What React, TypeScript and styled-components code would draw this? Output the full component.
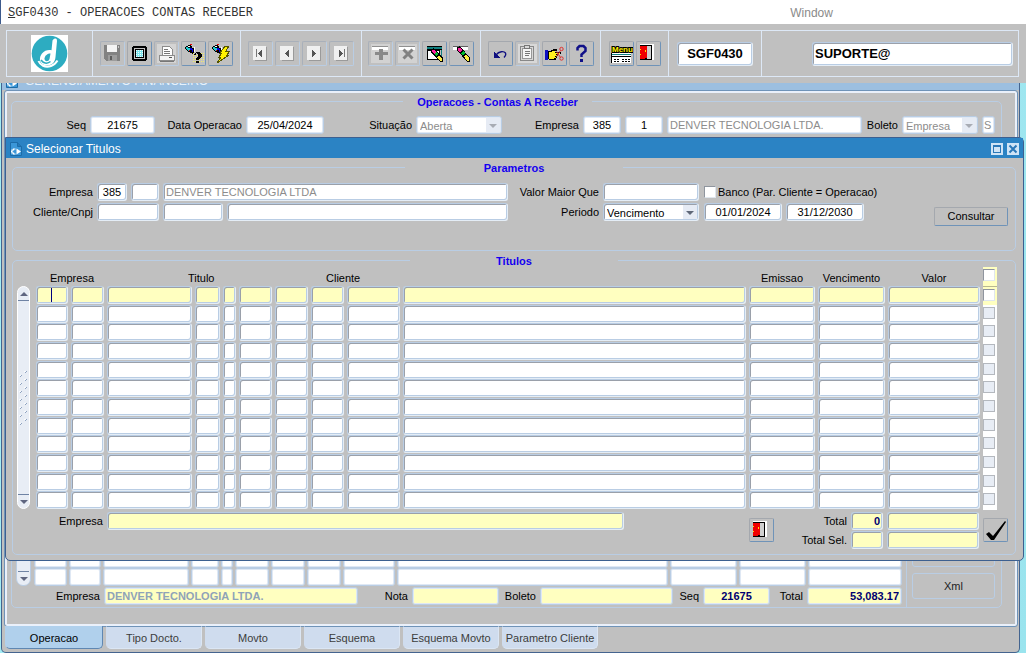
import React from "react";
import styled, { createGlobalStyle, css } from "styled-components";

const GlobalStyle = createGlobalStyle`
  *, *::before, *::after { box-sizing: border-box; }
  html, body { margin: 0; padding: 0; }
  body {
    background: #a2ecf4;
    color: #000;
    font: 11px/13px "Liberation Sans", Arial, sans-serif;
  }
  button, input, select { font: inherit; margin: 0; padding: 0; }
`;

const face = "#c0c0c0";
const line = "#b9cde4";
const cream = "#ffffc0";

/* ---------- page ---------- */

const Page = styled.div`
  display: flex;
  flex-direction: column;
  min-height: 100vh;
`;

const MenuBar = styled.nav`
  display: flex;
  align-items: center;
  height: 24px;
  padding-top: 1px;
  background: #fff;
  border-left: 1px solid #3c5a8c;
`;

const MenuItem = styled.button<{ $mono?: boolean }>`
  border: 0;
  background: none;
  text-align: left;
  font-size: 12px;
  line-height: 16px;
  color: #8a8a8a;
  ${(p) =>
    p.$mono &&
    css`
      flex: 0 0 77%;
      padding-left: 7px;
      font-family: "Liberation Mono", "Courier New", monospace;
      color: #333;
    `}
`;

const ToolbarArea = styled.header`
  padding: 6px 7px 6px 6px;
  background: ${face};
`;

const Toolbar = styled.div`
  display: flex;
  height: 47px;
  border: 1px solid #dde8f6;
`;

const ToolGroup = styled.div<{ $w?: number; $end?: boolean }>`
  display: flex;
  align-items: center;
  justify-content: ${(p) => (p.$end ? "flex-end" : "center")};
  gap: 2px;
  flex: ${(p) => (p.$w ? `0 0 ${p.$w}px` : "1 1 0")};
  padding-right: ${(p) => (p.$end ? 5 : 0)}px;
  & + & {
    border-left: 1px solid #dde8f6;
  }
`;

const ToolButton = styled.button<{ $off?: boolean }>`
  display: flex;
  align-items: center;
  justify-content: center;
  width: 25px;
  height: 25px;
  background: ${face};
  border: 1px solid;
  border-color: ${(p) => (p.$off ? "#a9b0ba #b9cde4 #b9cde4 #a9b0ba" : "#a4a8ae #6f93b8 #6f93b8 #a4a8ae")};
  border-radius: 2px;
`;

const Desktop = styled.main`
  position: relative;
  display: flex;
  flex: 1;
  padding: 0 6px 0 1px;
  background: linear-gradient(100deg, #a2ecf4, #aeeef6 60%, #9ae4ee);
`;

/* ---------- fields ---------- */

const Label = styled.label<{ $w?: number }>`
  flex: none;
  ${(p) => p.$w && `width: ${p.$w}px;`}
  text-align: right;
  white-space: nowrap;
`;

type FieldProps = {
  $w?: number;
  $flat?: boolean;
  $cream?: boolean;
  $align?: "left" | "center" | "right";
  $strong?: boolean;
  $muted?: string;
};

const fieldFrame = css<{ $flat?: boolean }>`
  border: 1px solid;
  border-color: ${line} #e4edf6 #e4edf6 ${line};
  border-radius: 3px;
  box-shadow: inset 1px 1px 0 #9aa0aa, inset -1px -1px 0 ${line};
  ${(p) =>
    p.$flat &&
    css`
      border-color: ${line};
      box-shadow: inset 0 0 0 1px #dfe8f4;
    `}
`;

const Field = styled.input<FieldProps>`
  ${fieldFrame}
  flex: ${(p) => (p.$w ? `0 0 ${p.$w}px` : "1 1 0")};
  width: ${(p) => (p.$w ? `${p.$w}px` : "100%")};
  min-width: 0;
  height: 18px;
  padding: 0 2px;
  outline: 0;
  background: ${(p) => (p.$cream ? cream : "#fff")};
  text-align: ${(p) => p.$align ?? "left"};
  color: ${(p) => p.$muted ?? (p.$strong ? "#000070" : "#000")};
  font-weight: ${(p) => (p.$strong ? 700 : 400)};
`;

const ToolbarField = styled(Field)`
  height: 24px;
  font-size: 13px;
  font-weight: 700;
`;

const FlagField = styled(Field)`
  padding: 0 0 0 1px;
`;

const SelectBox = styled.span<{ $w: number }>`
  position: relative;
  flex: 0 0 ${(p) => p.$w}px;
  height: 18px;
  svg {
    position: absolute;
    top: 2px;
    right: 2px;
    pointer-events: none;
  }
`;

const Select = styled.select<{ $flat?: boolean }>`
  ${fieldFrame}
  appearance: none;
  width: 100%;
  height: 18px;
  padding: 2px 3px 0;
  background: #fff;
  color: #000;
  opacity: 1;
  &:disabled {
    color: #8c8c8c;
  }
`;

const Tick = styled.input`
  appearance: none;
  display: block;
  flex: none;
  width: 12px;
  height: 12px;
  background: #fff;
  border: 1px solid;
  border-color: #8f959e #dfe6ee #dfe6ee #8f959e;
  &:disabled {
    background: #e8edf5;
    border-color: #b4b8be;
  }
`;

const Row = styled.div`
  display: flex;
  align-items: center;
  gap: 4px;
`;

const Group = styled.fieldset`
  min-width: 0;
  margin: 0;
  padding: 0;
  border: 1px solid ${line};
  border-radius: 5px;
`;

const Legend = styled.legend<{ $pad: number }>`
  margin: 0 auto;
  padding: 1px ${(p) => p.$pad}px 0;
  line-height: 12px;
  font-weight: 700;
  color: #1400f0;
`;

/* ---------- back window ---------- */

const Window = styled.section`
  display: flex;
  flex-direction: column;
  flex: 1;
  min-width: 0;
  padding: 0 2px 2px 3px;
  background: ${face};
  border: solid #44648f;
  border-width: 0 1px 1px;
  border-radius: 0 0 5px 5px;
`;

const ClippedTitle = styled.div`
  display: flex;
  align-items: flex-end;
  gap: 7px;
  height: 7px;
  margin: 0 -2px 0 -3px;
  padding: 0 4px 2px;
  overflow: hidden;
  background: #9cbfe0;
  color: #e6f1fb;
  font-size: 12px;
  line-height: 13px;
`;

const Sheet = styled.div`
  display: flex;
  flex-direction: column;
  flex: 1;
  padding: 2px 13px 16px 4px;
  border: 2px solid #eaf0fa;
  outline: 1px solid #6f93b8;
  border-radius: 2px;
  margin: 1px 0 0;
`;

const SheetGroup = styled(Group)`
  flex: 1;
  display: flex;
  flex-direction: column;
  padding-right: 18px;
`;

const SheetBody = styled.div`
  display: flex;
  flex-direction: column;
  flex: 1;
  height: 100%;
  margin-right: -18px;
`;

const SheetRow = styled(Row)`
  padding: 8px 6px 0 0;
`;

const SheetBottom = styled.div`
  display: flex;
  margin-top: auto;
`;

const SheetMain = styled.div`
  display: flex;
  flex-direction: column;
  justify-content: flex-end;
  flex: 1;
  min-width: 0;
`;

const SheetGridRow = styled.div`
  display: flex;
  padding: 0 2px 0 4px;
  gap: 3px;
`;

const SheetSide = styled.div`
  display: flex;
  flex-direction: column;
  gap: 6px;
  flex: 0 0 95px;
  padding: 0 6px 8px 5px;
  border-left: 1px solid ${line};
`;

const SideButton = styled.button`
  height: 26px;
  background: ${face};
  border: 1px solid ${line};
  border-radius: 3px;
  color: #222;
`;

const SheetFooter = styled(Row)`
  padding: 1px 4px 2px 0;
`;

const BackTable = styled.table`
  flex: 1;
  table-layout: fixed;
  border-collapse: collapse;
  td {
    padding: 0 2px 0 0;
  }
`;

const Tabs = styled.div`
  display: flex;
  gap: 3px;
  height: 24px;
`;

const Tab = styled.button<{ $on?: boolean }>`
  width: ${(p) => (p.$on ? 98 : 96)}px;
  height: 23px;
  padding-top: ${(p) => (p.$on ? 2 : 1)}px;
  border: 1px solid;
  border-color: ${(p) => (p.$on ? "#b0d0ec #5f87b2 #5f87b2 #b0d0ec" : "#6f93b8 #dbe6f4 #dbe6f4 #cfdcee")};
  border-top-width: ${(p) => (p.$on ? 0 : 1)}px;
  border-radius: 0 0 5px 5px;
  background: ${(p) => (p.$on ? "#b0d0ec" : "#cfdcee")};
  color: ${(p) => (p.$on ? "#000" : "#3c3c3c")};
  white-space: nowrap;
`;

/* ---------- dialog ---------- */

const Dialog = styled.section`
  position: absolute;
  top: 54px;
  left: 5px;
  right: 2px;
  padding-bottom: 5px;
  background: ${face};
  border: 1px solid #3d6090;
  border-radius: 0 5px 5px 5px;
`;

const TitleBar = styled.header`
  display: flex;
  align-items: center;
  gap: 4px;
  height: 20px;
  padding: 1px 4px 0;
  background: #2b83c4;
  color: #fff;
`;

const DialogTitle = styled.h1`
  flex: 1;
  margin: 0;
  font-size: 12px;
  line-height: 14px;
  font-weight: 400;
`;

const WinButton = styled.button`
  display: flex;
  width: 12px;
  height: 12px;
  border: 0;
  background: #cfe4f6;
`;

const DialogBody = styled.div`
  display: flex;
  flex-direction: column;
  gap: 3px;
  padding: 3px 7px 0 6px;
`;

const Params = styled.div`
  display: flex;
  align-items: flex-end;
  gap: 4px;
  padding: 9px 7px 24px 0;
`;

const ParamRows = styled.div`
  display: flex;
  flex: 1;
  flex-direction: column;
  gap: 2px;
  min-width: 0;
  padding-bottom: 5px;
`;

const ParamTail = styled(Row)`
  flex: 0 0 227px;
  padding-left: 1px;
`;

const CheckLabel = styled.label`
  display: flex;
  align-items: center;
  gap: 2px;
  white-space: nowrap;
`;

const PushButton = styled.button`
  width: 74px;
  height: 19px;
  background: ${face};
  border: 1px solid;
  border-color: #a4a8ae #6f93b8 #6f93b8 #a4a8ae;
  border-radius: 2px;
`;

const GridArea = styled.div`
  display: flex;
  gap: 6px;
  padding: 0 18px 0 4px;
`;

const ScrollTrack = styled.div`
  display: flex;
  flex-direction: column;
  justify-content: space-between;
  align-items: center;
  flex: 0 0 13px;
  margin: 19px 0 1px;
  background: #e8edf5;
  border: 1px solid #fff;
  border-radius: 7px;
`;

const ScrollButton = styled.button<{ $down?: boolean }>`
  display: flex;
  align-items: center;
  justify-content: center;
  width: 11px;
  height: 14px;
  background: none;
  border: 0 solid #6f83a4;
  ${(p) => (p.$down ? "border-top-width: 1px;" : "border-bottom-width: 1px;")}
`;

const BackScroll = styled.div`
  display: flex;
  align-items: flex-end;
  justify-content: center;
  flex: 0 0 15px;
  background: #e8edf5;
  border: 1px solid ${line};
  border-radius: 0 0 7px 7px;
`;

const Grid = styled.table`
  flex: 1;
  min-width: 0;
  table-layout: fixed;
  border-collapse: collapse;
`;

const HeadCell = styled.th<{ $indent?: number }>`
  height: 19px;
  padding: 3px 3px 0 ${(p) => p.$indent ?? 0}px;
  font-weight: 400;
  text-align: ${(p) => (p.$indent ? "left" : "center")};
`;

const TickHead = styled.th`
  height: 19px;
  padding: 2px 0 0;
  vertical-align: top;
  background: ${cream};
  border-bottom: 1px solid #b8b890;
`;

const GridRow = styled.tr`
  height: 19px;
  &:nth-child(3n + 2) {
    height: 18px;
  }
`;

const GridCell = styled.td`
  padding: 0 3px 0 0;
  vertical-align: top;
`;

const TickCell = styled.td<{ $cream?: boolean }>`
  padding: 2px 0 0;
  vertical-align: top;
  background: ${(p) => (p.$cream ? cream : "#fff")};
`;

const CellField = styled(Field)<{ $caret?: boolean }>`
  display: block;
  ${(p) =>
    p.$caret &&
    css`
      background: linear-gradient(#000080, #000080) no-repeat 14px 1px / 1px 14px ${cream};
    `}
`;

const Footer = styled.div`
  display: flex;
  align-items: flex-start;
  gap: 4px;
  padding: 2px 7px 5px 0;
`;

const FooterName = styled(Row)`
  flex: 1;
  padding-right: 121px;
`;

const Totals = styled.div`
  display: flex;
  flex-direction: column;
  gap: 1px;
`;

const FooterButton = styled(ToolButton)`
  margin-top: 6px;
  height: 24px;
`;

/* ---------- icons ---------- */

const Icon = ({ children }: { children: React.ReactNode }) => (
  <svg width="23" height="23" viewBox="1 1 23 23" shapeRendering="crispEdges" aria-hidden="true">
    {children}
  </svg>
);

const Logo = () => (
  <svg width="37" height="37" viewBox="0 0 37 37" aria-hidden="true">
    <rect width="37" height="37" fill="#fff" />
    <circle cx="18.500" cy="18.500" r="17.800" fill="#2dacc1" />
    <path
      d="M21.500 5.500C23.500 3 26 2.800 26 6L24.500 22C24 29 18 32 13 30C8 28 8 22 11 18.500C13.500 15.500 17 14.500 20.500 15.200Z"
      fill="#fff"
    />
    <path d="M19.500 18.500L18.500 24C17.500 27 13.500 27 13.500 23.500C13.800 20.500 16.500 18.500 19.500 18.500Z" fill="#2dacc1" />
    <path d="M7.500 26C9 30 14 33 20 31C23 30 25 28 26.500 25.500" stroke="#fff" strokeWidth="2" fill="none" />
    <path d="M10 25C12 28 16 29.500 19.500 26.500" stroke="#2dacc1" strokeWidth="1.500" fill="none" />
  </svg>
);

const DocIcon = () => (
  <svg width="12" height="14" viewBox="0 0 12 14" aria-hidden="true">
    <path d="M0.500 0.500h7l4 4v9h-11z" fill="#3b97d8" stroke="#1c6ca8" />
    <path d="M7.500 0.500v4h4" fill="#2479b8" stroke="#1c6ca8" />
    <path d="M6.500 6.500l4.500 3-4.500 3z" fill="#fff" />
    <path d="M5.500 7H3.500v1H2v3h1.500v1h2M2 9.500H1" stroke="#fff" strokeWidth="1.200" fill="none" />
  </svg>
);

const SaveIcon = () => (
  <Icon>
    <path d="M4 4h15l1 1v15H6l-2-2z" fill="#828282" />
    <path d="M7 4h10v7H7z" fill="#f4f4f4" />
    <path d="M8 14h9v6H8z" fill="#9c9c9c" />
    <path d="M10 15h2v4h-2z" fill="#5c5c5c" />
    <path d="M18 5h1v2h-1z" fill="#c8c8c8" />
  </Icon>
);

const ScreenIcon = () => (
  <Icon>
    <path d="M6 5h13v1h1v13h-1v1H6v-1H5V6h1z" fill="#000" />
    <path d="M7 7h11v11H7z" fill="#c0c0c0" />
    <path d="M8 8h9v9H8z" fill="#000" />
    <path d="M9 9h7v7H9z" fill="#7fe6ee" />
    <path d="M9 9.500h7M9 11.500h7M9 13.500h7M9 15.500h7" stroke="#f0ffff" strokeDasharray="1 1" />
  </Icon>
);

const PrintIcon = () => (
  <Icon>
    <path d="M3 3h19v19H3z" fill="#d4d4d4" />
    <path d="M8 5h7l3 3v6H8z" fill="#fff" stroke="#8c8c8c" />
    <path d="M10 8h4M10 10h6M10 12h6" stroke="#777" />
    <path d="M5 14h15v5H5z" fill="#f4f4f4" stroke="#8c8c8c" />
    <path d="M6 20h14" stroke="#777" />
    <path d="M15 16h3" stroke="#555" />
  </Icon>
);

const Torch = () => (
  <>
    <path d="M4 6h1V5h2V4h3v1h1v2h2v5h-1v1h-1v-1H9v-1H7v-1H6V9H5V8H4z" fill="#000" />
    <path d="M5 6h2v1h2v3H7V9H6V8H5z" fill="#20c8d0" />
    <path d="M9 7h2v1h1v3h-1V9H9z" fill="#0000e0" />
    <path d="M9 3h2v1H9zM8 9h1v1H8z" fill="#f00000" />
    <path d="M7 5h2v1H7zM13 6h1v5h-1z" fill="#fff" />
  </>
);

const QueryIcon = () => (
  <Icon>
    <Torch />
    <path d="M12 12.500h11M12 14.500h11M12 16.500h11M12 18.500h11M12 20.500h11" stroke="#f4f060" strokeDasharray="1 1" />
    <path d="M13 13h1v-1h1v-1h4v1h1v1h1v3h-1v1h-1v1h-1v1h-3v-2h1v-1h1v-3h-1v-1h-1v2h-3zM15 20h3v2h-3z" fill="#000" />
  </Icon>
);

const RunQueryIcon = () => (
  <Icon>
    <Torch />
    <path d="M17 5h4l-3 5h4l-3 4h2L9 22l4-6h-2l3-4h-2z" fill="#fff200" stroke="#555500" />
  </Icon>
);

const NavIcon = ({ back, bar }: { back?: boolean; bar?: boolean }) => (
  <Icon>
    <path d="M5 5h13v14H5z" fill="#f0f0f0" />
    <path d="M18 6v13H7" stroke="#9a9a9a" fill="none" />
    {back ? <path d="M14 9v7l-4-3.500z" fill="#555" /> : <path d="M10 9v7l4-3.500z" fill="#555" />}
    {bar && <path d={back ? "M8 8h1v8H8z" : "M15 8h1v8h-1z"} fill="#777" />}
  </Icon>
);

const RecordIcon = ({ remove }: { remove?: boolean }) => (
  <Icon>
    <path d="M3 3h19v19H3z" fill="#d2d2d2" />
    <path d="M4 5h16v4H4z" fill="#fff" />
    <path d="M4 5h16v1H4z" fill="#909090" />
    {remove ? (
      <path d="M8.500 8.500l9 9M17.500 8.500l-9 9" stroke="#808080" strokeWidth="3" shapeRendering="auto" />
    ) : (
      <path d="M11 8h4v3h5v3h-5v5h-4v-5H7v-3h4z" fill="#8a8a8a" />
    )}
  </Icon>
);

const Pencil = () => (
  <>
    <path d="M9 8l3-1 9 10v4h-3L9 11z" fill="#000" />
    <path d="M10 9h2l2 2-2 2-2-2z" fill="#ff20a0" />
    <path d="M12 13l2-2 2 2-2 2z" fill="#00c030" />
    <path d="M15 16l2-2 3 4v2h-2z" fill="#fff040" />
  </>
);

const ClearBlockIcon = () => (
  <Icon>
    <path d="M5 5h15v1H5zM5 8h15v1H5z" fill="#000" />
    <path d="M5 6h15v2H5z" fill="#108080" />
    <path d="M5 9h13v10H5z" fill="#000" />
    <path d="M6 10h11v8H6z" fill="#fff" />
    <path d="M19 9h1v8h-1z" fill="#108080" />
    <Pencil />
  </Icon>
);

const ClearRecordIcon = () => (
  <Icon>
    <path d="M4 5h15v4H4z" fill="#fff" />
    <path d="M4 5h15v1H4z" fill="#606060" />
    <path d="M8 6l3-1 10 12v4h-3L8 9z" fill="#000" />
    <path d="M9 7h2l2 2-2 3-2-3z" fill="#ff20a0" />
    <path d="M12 12l2-2 2 2-2 3z" fill="#00c030" />
    <path d="M15 15l2-2 3 4v3h-2z" fill="#fff040" />
  </Icon>
);

const UndoIcon = () => (
  <Icon>
    <path d="M8 14c3-4 8-4 9.500-2 1 2 0 3-1.500 4.500" stroke="#101080" fill="none" shapeRendering="auto" strokeWidth="1.300" />
    <path d="M6 11v6h6z" fill="#101080" />
  </Icon>
);

const ClipIcon = () => (
  <Icon>
    <path d="M3 3h19v19H3z" fill="#d8d8d8" />
    <path d="M5.500 5.500h13v14h-13z" fill="none" stroke="#888" />
    <path d="M7.500 7.500h9v10h-9z" fill="#f6f6f6" stroke="#999" />
    <path d="M9.500 4.500h5v3h-5z" fill="#d8d8d8" stroke="#777" />
    <path d="M10 10.500h5M10 12.500h5M10 14.500h4" stroke="#777" />
  </Icon>
);

const HandIcon = () => (
  <Icon>
    <path d="M3 9h3v10H3z" fill="#1010c0" />
    <path d="M6 10h3V9h2V8h4v2h-2v1h6v2h-3v2h-1v2h-1v2H7v-1H6z" fill="#000" />
    <path d="M7 11h3v-1h3v2h5v1h-4v1h1v1h-2v1h1v1h-2v1H7z" fill="#fff020" />
    <g stroke="#e03030" fill="none" shapeRendering="auto">
      <path d="M14.500 15.500l4-6M14.500 10.500l4 6" />
      <circle cx="19.500" cy="8" r="1.700" />
      <circle cx="19.500" cy="17.500" r="1.700" />
    </g>
  </Icon>
);

const HelpIcon = () => (
  <Icon>
    <path
      d="M8.500 9.500V7l2-2h4l2 2v3l-4 3.500V16"
      stroke="#101088"
      strokeWidth="2.500"
      fill="none"
      shapeRendering="auto"
    />
    <path d="M11 18h3v3h-3z" fill="#101088" />
  </Icon>
);

const MenuIcon = () => (
  <Icon>
    <text
      x="3"
      y="11"
      fontFamily="Liberation Sans, Arial, sans-serif"
      fontSize="8"
      fontWeight="700"
      fill="#fff200"
      stroke="#000"
      strokeWidth="2"
      paintOrder="stroke"
      shapeRendering="auto"
    >
      Menu
    </text>
    <path d="M3 12h19v10H3z" fill="#fff" />
    <path d="M3 13h19v1H3z" fill="#108080" />
    <path d="M2 12h1v10H2zM3 15h19v1H3z" fill="#000" />
    <path d="M5 18.500h6M13 18.500h8M5 20.500h6M13 20.500h8" stroke="#000" strokeDasharray="2 1" />
  </Icon>
);

const DoorIcon = () => (
  <Icon>
    <path d="M4 3h14v16H4z" fill="#fff" />
    <path d="M4 4h12v15H4z" fill="#000" />
    <path d="M11 5h4v13h-4z" fill="#d0d0d0" />
    <path d="M4 5h7v12H9v1H4z" fill="#f00000" />
    <path d="M9 9h1v2H9zM4 8h1v1H4zM4 13h1v1H4z" fill="#ffe000" />
  </Icon>
);

const CheckIcon = () => (
  <svg width="22" height="22" viewBox="0 0 22 22" aria-hidden="true">
    <path d="M1 15l3-2 4 4L20 2l1 1L9 21H6z" fill="#000" />
  </svg>
);

const SelectArrow = ({ dim }: { dim?: boolean }) => (
  <svg width="14" height="14" viewBox="0 0 14 14" aria-hidden="true">
    <rect width="14" height="14" fill="#e6ebf4" />
    <path d="M3 6h8l-4 4z" fill={dim ? "#a8acb4" : "#5f6878"} />
  </svg>
);

const Arrow = ({ down }: { down?: boolean }) => (
  <svg width="8" height="4" viewBox="0 0 8 4" aria-hidden="true">
    <path d={down ? "M0 0h8l-4 4z" : "M0 4h8l-4-4z"} fill="#5f6680" />
  </svg>
);

const Grip = () => (
  <svg width="9" height="54" viewBox="0 0 9 54" aria-hidden="true">
    {Array.from({ length: 7 }, (_, i) => (
      <React.Fragment key={i}>
        <path d={`M6 ${i * 8 + 2}l2-2M1 ${i * 8 + 6}l2-2`} stroke="#8fa3c0" />
        <path d={`M5 ${i * 8 + 1}l2-1M0 ${i * 8 + 5}l2-1`} stroke="#fff" />
      </React.Fragment>
    ))}
  </svg>
);

/* ---------- data ---------- */

type Tool = { name: string; icon: React.ReactNode; off?: boolean };

const tools: { w: number; items: Tool[] }[] = [
  {
    w: 148,
    items: [
      { name: "Salvar", icon: <SaveIcon />, off: true },
      { name: "Tela", icon: <ScreenIcon /> },
      { name: "Imprimir", icon: <PrintIcon />, off: true },
      { name: "Entrar consulta", icon: <QueryIcon /> },
      { name: "Executar consulta", icon: <RunQueryIcon /> },
    ],
  },
  {
    w: 121,
    items: [
      { name: "Primeiro", icon: <NavIcon back bar />, off: true },
      { name: "Anterior", icon: <NavIcon back />, off: true },
      { name: "Proximo", icon: <NavIcon />, off: true },
      { name: "Ultimo", icon: <NavIcon bar />, off: true },
    ],
  },
  {
    w: 119,
    items: [
      { name: "Inserir", icon: <RecordIcon />, off: true },
      { name: "Excluir", icon: <RecordIcon remove />, off: true },
      { name: "Limpar bloco", icon: <ClearBlockIcon /> },
      { name: "Limpar registro", icon: <ClearRecordIcon /> },
    ],
  },
  {
    w: 120,
    items: [
      { name: "Desfazer", icon: <UndoIcon /> },
      { name: "Colar", icon: <ClipIcon />, off: true },
      { name: "Recortar", icon: <HandIcon /> },
      { name: "Ajuda", icon: <HelpIcon /> },
    ],
  },
  {
    w: 68,
    items: [
      { name: "Menu", icon: <MenuIcon /> },
      { name: "Sair", icon: <DoorIcon /> },
    ],
  },
];

const gridColumns = [
  { name: "Empresa", w: 35 },
  { name: "Filial", w: 36 },
  { name: "Titulo", w: 88 },
  { name: "Serie", w: 28 },
  { name: "Tipo", w: 16 },
  { name: "Parcela", w: 36 },
  { name: "Sequencia", w: 36 },
  { name: "Cliente", w: 36 },
  { name: "Codigo", w: 56 },
  { name: "Nome", w: 0 },
  { name: "Emissao", w: 69 },
  { name: "Vencimento", w: 70 },
  { name: "Valor", w: 95 },
];

const backColumns = [35, 34, 88, 30, 14, 36, 36, 36, 54, 0, 69, 69, 96];

const tabs = ["Operacao", "Tipo Docto.", "Movto", "Esquema", "Esquema Movto", "Parametro Cliente"];

/* ---------- screen ---------- */

const BackWindow = () => (
  <Window>
    <ClippedTitle>
      <DocIcon />
      GERENCIAMENTO FINANCEIRO
    </ClippedTitle>
    <Sheet>
      <SheetGroup>
        <Legend $pad={14}>Operacoes - Contas A Receber</Legend>
        <SheetBody>
          <SheetRow>
            <Label $w={74} htmlFor="seq">Seq</Label>
            <Field id="seq" $w={65} $flat $align="center" defaultValue="21675" />
            <Label $w={83} htmlFor="data">Data Operacao</Label>
            <Field id="data" $w={78} $flat $align="center" defaultValue="25/04/2024" />
            <Label $w={84} htmlFor="situacao">Situação</Label>
            <SelectBox $w={86}>
              <Select id="situacao" $flat disabled defaultValue="Aberta">
                <option>Aberta</option>
              </Select>
              <SelectArrow dim />
            </SelectBox>
            <Label $w={73} htmlFor="emp">Empresa</Label>
            <Field id="emp" $w={38} $flat $align="center" defaultValue="385" />
            <Field aria-label="Filial" $w={38} $flat $align="center" defaultValue="1" />
            <Field aria-label="Nome da empresa" $flat $muted="#8c8c8c" readOnly value="DENVER TECNOLOGIA LTDA." />
            <Label $w={32} htmlFor="boletoTipo">Boleto</Label>
            <SelectBox $w={76}>
              <Select id="boletoTipo" $flat disabled defaultValue="Empresa">
                <option>Empresa</option>
              </Select>
              <SelectArrow dim />
            </SelectBox>
            <FlagField aria-label="Indicador" $w={13} $flat $muted="#8c8c8c" readOnly value="S" />
          </SheetRow>
          <SheetBottom>
            <SheetMain>
              <SheetGridRow>
                <BackScroll>
                  <ScrollButton $down aria-label="Descer lista">
                    <Arrow down />
                  </ScrollButton>
                </BackScroll>
                <BackTable>
                  <colgroup>
                    {backColumns.map((w, i) => (
                      <col key={i} width={w || undefined} />
                    ))}
                  </colgroup>
                  <tbody>
                    {[0, 1].map((r) => (
                      <tr key={r}>
                        {backColumns.map((_, i) => (
                          <td key={i}>
                            <CellField $flat aria-label={`Item ${r + 1}, coluna ${i + 1}`} />
                          </td>
                        ))}
                      </tr>
                    ))}
                  </tbody>
                </BackTable>
              </SheetGridRow>
              <SheetFooter>
                <Label $w={88} htmlFor="empNome">Empresa</Label>
                <Field id="empNome" $w={254} $flat $cream $strong $muted="#8fa3b8" readOnly value="DENVER TECNOLOGIA LTDA." />
                <Label $w={46} htmlFor="nota">Nota</Label>
                <Field id="nota" $w={87} $flat $cream />
                <Label $w={33} htmlFor="boleto">Boleto</Label>
                <Field id="boleto" $flat $cream />
                <Label $w={22} htmlFor="seqTotal">Seq</Label>
                <Field id="seqTotal" $w={67} $flat $cream $strong $align="center" readOnly value="21675" />
                <Label $w={29} htmlFor="total">Total</Label>
                <Field id="total" $w={95} $flat $cream $strong $align="right" readOnly value="53,083.17" />
              </SheetFooter>
            </SheetMain>
            <SheetSide>
              <SideButton aria-label="Outros" />
              <SideButton>Xml</SideButton>
            </SheetSide>
          </SheetBottom>
        </SheetBody>
      </SheetGroup>
    </Sheet>
    <Tabs role="tablist">
      {tabs.map((t, i) => (
        <Tab key={t} role="tab" aria-selected={i === 0} $on={i === 0}>
          {t}
        </Tab>
      ))}
    </Tabs>
  </Window>
);

const SelectDialog = () => (
  <Dialog role="dialog" aria-labelledby="dialogTitle">
    <TitleBar>
      <DocIcon />
      <DialogTitle id="dialogTitle">Selecionar Titulos</DialogTitle>
      <WinButton aria-label="Maximizar">
        <svg width="12" height="12" viewBox="0 0 12 12" shapeRendering="crispEdges" aria-hidden="true">
          <path d="M2.500 3.500h7v6h-7zM2 2.500h8" fill="none" stroke="#2b78b8" />
        </svg>
      </WinButton>
      <WinButton aria-label="Fechar">
        <svg width="12" height="12" viewBox="0 0 12 12" aria-hidden="true">
          <path d="M2.500 2.500l7 7M9.500 2.500l-7 7" stroke="#2b78b8" strokeWidth="2" />
        </svg>
      </WinButton>
    </TitleBar>
    <DialogBody>
      <Group>
        <Legend $pad={79}>Parametros</Legend>
        <Params>
          <ParamRows>
            <Row>
              <Label $w={80} htmlFor="pEmpresa">Empresa</Label>
              <Field id="pEmpresa" $w={30} $align="center" defaultValue="385" />
              <Field aria-label="Filial" $w={28} />
              <Field aria-label="Nome da empresa" $muted="#8c8c8c" readOnly value="DENVER TECNOLOGIA LTDA" />
              <Label $w={87} htmlFor="valorMaior">Valor Maior Que</Label>
              <Field id="valorMaior" $w={96} />
              <ParamTail>
                <CheckLabel>
                  <Tick type="checkbox" />
                  Banco (Par. Cliente = Operacao)
                </CheckLabel>
              </ParamTail>
            </Row>
            <Row>
              <Label $w={80} htmlFor="cliente">Cliente/Cnpj</Label>
              <Field id="cliente" $w={62} />
              <Field aria-label="Cnpj" $w={60} />
              <Field aria-label="Nome do cliente" />
              <Label $w={87} htmlFor="periodo">Periodo</Label>
              <SelectBox $w={96}>
                <Select id="periodo" defaultValue="Vencimento">
                  <option>Vencimento</option>
                  <option>Emissao</option>
                </Select>
                <SelectArrow />
              </SelectBox>
              <ParamTail>
                <Field aria-label="Data inicial" $w={78} $align="center" defaultValue="01/01/2024" />
                <Field aria-label="Data final" $w={78} $align="center" defaultValue="31/12/2030" />
              </ParamTail>
            </Row>
          </ParamRows>
          <PushButton>Consultar</PushButton>
        </Params>
      </Group>
      <Group>
        <Legend $pad={86}>Titulos</Legend>
        <GridArea>
          <ScrollTrack>
            <ScrollButton aria-label="Subir">
              <Arrow />
            </ScrollButton>
            <Grip />
            <ScrollButton $down aria-label="Descer">
              <Arrow down />
            </ScrollButton>
          </ScrollTrack>
          <Grid>
            <colgroup>
              {gridColumns.map((c) => (
                <col key={c.name} width={c.w || undefined} />
              ))}
              <col width={14} />
            </colgroup>
            <thead>
              <tr>
                <HeadCell colSpan={2} $indent={14}>Empresa</HeadCell>
                <HeadCell colSpan={5} $indent={81}>Titulo</HeadCell>
                <HeadCell colSpan={2} $indent={15}>Cliente</HeadCell>
                <HeadCell aria-label="Nome" />
                <HeadCell>Emissao</HeadCell>
                <HeadCell>Vencimento</HeadCell>
                <HeadCell>Valor</HeadCell>
                <TickHead>
                  <Tick type="checkbox" aria-label="Selecionar todos" />
                </TickHead>
              </tr>
            </thead>
            <tbody>
              {Array.from({ length: 12 }, (_, r) => (
                <GridRow key={r}>
                  {gridColumns.map((c, i) => (
                    <GridCell key={c.name}>
                      <CellField $cream={r === 0} $caret={r === 0 && i === 0} aria-label={`${c.name}, linha ${r + 1}`} />
                    </GridCell>
                  ))}
                  <TickCell $cream={r === 0}>
                    <Tick type="checkbox" disabled={r > 0} aria-label={`Selecionar linha ${r + 1}`} />
                  </TickCell>
                </GridRow>
              ))}
            </tbody>
          </Grid>
        </GridArea>
        <Footer>
          <FooterName>
            <Label $w={90} htmlFor="tEmpresa">Empresa</Label>
            <Field id="tEmpresa" $cream />
          </FooterName>
          <FooterButton aria-label="Sair">
            <DoorIcon />
          </FooterButton>
          <Totals>
            <Row>
              <Label $w={69} htmlFor="qtd">Total</Label>
              <Field id="qtd" $w={32} $cream $strong $align="right" readOnly value="0" />
              <Field aria-label="Valor total" $w={92} $cream />
            </Row>
            <Row>
              <Label $w={69} htmlFor="qtdSel">Total Sel.</Label>
              <Field id="qtdSel" $w={32} $cream />
              <Field aria-label="Valor selecionado" $w={92} $cream />
            </Row>
          </Totals>
          <FooterButton aria-label="Confirmar">
            <CheckIcon />
          </FooterButton>
        </Footer>
      </Group>
    </DialogBody>
  </Dialog>
);

export default function App() {
  return (
    <Page>
      <GlobalStyle />
      <MenuBar>
        <MenuItem $mono>
          <u>S</u>GF0430 - OPERACOES CONTAS RECEBER
        </MenuItem>
        <MenuItem>Window</MenuItem>
      </MenuBar>
      <ToolbarArea>
        <Toolbar>
          <ToolGroup $w={85}>
            <Logo />
          </ToolGroup>
          {tools.map((g) => (
            <ToolGroup key={g.w} $w={g.w}>
              {g.items.map((t) => (
                <ToolButton key={t.name} $off={t.off} aria-label={t.name}>
                  {t.icon}
                </ToolButton>
              ))}
            </ToolGroup>
          ))}
          <ToolGroup $w={93}>
            <ToolbarField aria-label="Programa" $w={76} $align="center" readOnly value="SGF0430" />
          </ToolGroup>
          <ToolGroup $end>
            <ToolbarField aria-label="Usuario" $w={201} readOnly value="SUPORTE@" />
          </ToolGroup>
        </Toolbar>
      </ToolbarArea>
      <Desktop>
        <BackWindow />
        <SelectDialog />
      </Desktop>
    </Page>
  );
}
